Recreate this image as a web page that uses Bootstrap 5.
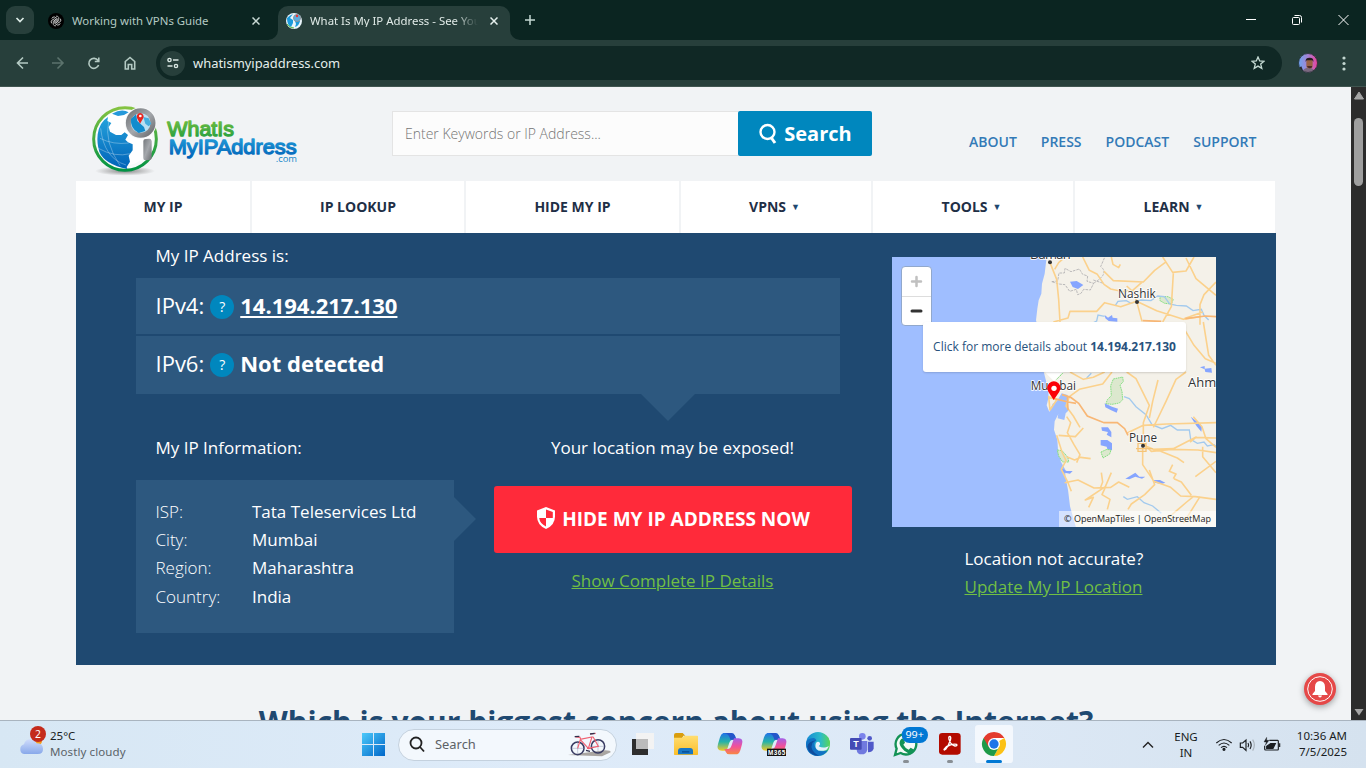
<!DOCTYPE html>
<html lang="en">
<head>
<meta charset="utf-8">
<title>What Is My IP Address</title>
<link href="https://cdn.jsdelivr.net/npm/bootstrap@5.3.0/dist/css/bootstrap.min.css" rel="stylesheet">
<style>
html,body{height:768px;overflow:hidden}
body{font-family:"Open Sans","Noto Sans",sans-serif;background:#f1f3f5;line-height:1.2;font-size:13px;width:1366px}
svg{display:block;flex:none}
.chrome-ui{font-family:"Noto Sans","Open Sans",sans-serif;font-size:11.4px}
.tabstrip{height:40px;background:#0b2521;color:#b4cac3}
.tab-search{width:28px;height:28px;border-radius:9px;background:#273f3b;margin:6px 0 0 6px}
.tab-idle{width:244px;padding:1px 0 0 14px}
.tab-live{width:232px;height:34px;margin-top:6px;background:#273f3b;border-radius:10px 10px 0 0;color:#e1ebe8;padding:0 0 5px 8px}
.tab-live .ttl{width:168px;overflow:hidden;white-space:nowrap;-webkit-mask-image:linear-gradient(90deg,#000 86%,transparent)}
.toolbar{height:47px;background:#273f3b;border-bottom:1px solid #405550}
.omni{width:1126px;height:34px;border-radius:17px;background:#102825;color:#e4eeeb;font-size:12.95px}
.site-chip{width:25px;height:25px;border-radius:50%;background:#273f3b;margin-left:4px}
.viewport{height:633px;overflow:hidden}
.page-body{width:1351px;background:#f1f3f5;padding-left:76px}
.site{width:1200px}
.site-head{height:94px}
.search-in{width:346px;height:45px;border:1px solid #e4e4e4;border-right:0;background:#fcfcfc;color:#757575;font-weight:300;font-size:14px;padding:1px 0 0 12px}
.search-go{width:134px;height:45px;background:#0087be;color:#fff;font-weight:700;font-size:20px;border-radius:2px}
.toplinks{gap:24px;font-size:14px;font-weight:600;letter-spacing:0;color:#337ab7}
.mainnav{height:52px;gap:2px;font-size:14px;font-weight:700;color:#1f2f46}
.mainnav>div{background:#fff}
.mainnav i{font-style:normal;font-size:9px;color:#1f4870;margin:0 3px 0 5px}
.panel{height:432px;background:#1f4971;color:#fff;font-size:17px;padding-left:60px}
.ln{line-height:28px;white-space:nowrap}
.iprow{background:#2d587f;padding-left:19.5px;font-size:22px}
.iprow b,.iprow .lbl{position:relative;top:-1px}
.q{width:24px;height:24px;border-radius:50%;background:#0087be;font-size:14px;margin:2px 6px 0 6px}
.tri-dn{position:absolute;left:505px;top:116px;border:27px solid transparent;border-top-color:#2d587f;border-bottom:0}
.tri-rt{position:absolute;left:318px;top:17px;border:22px solid transparent;border-left-color:#2d587f;border-right:0}
.infobox{position:relative;width:318px;height:153px;background:#2d587f;padding:18px 0 0 19.5px}
.infobox .k{width:96.5px;font-weight:300}
.infobox .ln:last-child{margin-top:1px}
.hidebtn{width:358px;height:67px;border-radius:3px;background:#ff2a3a;font-size:19px;font-weight:700}
.green{color:#71bf44;text-decoration:underline}
.mapbox{width:324px;height:270px;position:relative}
.zoomer{position:absolute;left:9px;top:9px;width:31px;height:60px;border:1px solid #91a8cc;border-radius:4px;background:#fff}
.popup{position:absolute;left:31px;top:65px;width:263px;height:50px;background:#fff;border-radius:3px;color:#28527d;font-size:12px;box-shadow:0 1px 2px rgba(0,0,0,.15);white-space:nowrap}
.attrib{position:absolute;right:0;bottom:0;height:16px;width:157px;background:rgba(255,255,255,.55);color:#222;font-size:9px;white-space:nowrap}
.bigq{font-size:30px;font-weight:700;color:#1f4971;line-height:40px;padding-top:37px;white-space:nowrap}
.scroller{width:15px;background:#2c2c2c}
.thumb{width:9px;height:68px;border-radius:5px;background:#9f9f9f;margin-top:18px}
.bell{position:absolute;left:1302px;top:671px;filter:drop-shadow(0 2px 3px rgba(0,0,0,.35))}
.taskbar{height:48px;border-top:1px solid #a9b4bf;background:linear-gradient(90deg,#d7e7f4,#deebf9 40%,#dde9f6 70%,#d5e2ef);font-family:"Noto Sans","Open Sans",sans-serif;font-size:11.5px;color:#191d22}
.wsearch{width:219px;height:32px;border-radius:16px;background:#f3f8fd;border:1px solid #c4d1de;color:#5c6166;font-size:12.900px;margin-left:13px}
</style>
</head>
<body class="d-flex flex-column">
<header class="chrome-ui flex-shrink-0">
  <div class="tabstrip d-flex">
    <div class="tab-search d-flex align-items-center justify-content-center"><svg width="10" height="8" viewBox="0 0 10 8" fill="none" stroke="#dcebe6" stroke-width="1.7"><path d="M1.5 2 5 5.5 8.500 2"/></svg></div>
    <div class="tab-idle d-flex align-items-center">
      <svg width="16" height="16" viewBox="0 0 16 16"><circle cx="8" cy="8" r="8" fill="#000"/><g fill="none" stroke="#d8d8d8" stroke-width=".8"><g id="k"><path d="M8 3.200a2.300 2.300 0 0 1 2.700 1.400v3.200L8 9.300"/></g><use href="#k" transform="rotate(60 8 8)"/><use href="#k" transform="rotate(120 8 8)"/><use href="#k" transform="rotate(180 8 8)"/><use href="#k" transform="rotate(240 8 8)"/><use href="#k" transform="rotate(300 8 8)"/></g></svg>
      <span style="margin-left:8px">Working with VPNs Guide</span>
      <svg class="ms-auto" style="margin-right:18px" width="8" height="8" viewBox="0 0 8 8" stroke="#c9dad5" stroke-width="1.500"><path d="M.5.5l7 7M7.500.5l-7 7"/></svg>
    </div>
    <div class="tab-live d-flex align-items-center position-relative">
      <svg class="position-absolute" style="left:-10px;bottom:0" width="10" height="10"><path d="M10 0v10H0A10 10 0 0 0 10 0" fill="#273f3b"/></svg>
      <svg class="position-absolute" style="right:-10px;bottom:0" width="10" height="10"><path d="M0 0v10h10A10 10 0 0 1 0 0" fill="#273f3b"/></svg>
      <svg width="16" height="16" viewBox="0 0 16 16"><circle cx="8" cy="8" r="8" fill="#eaf5fb"/><path d="M1 5q3-3 6-4L4 5l3 2v3l-2 4Q1 12 1 5M9 8l5 0q-1 5-5 6l1-3z" fill="#1b9bdc"/><circle cx="11" cy="5" r="3.500" fill="#5aaee0" stroke="#8d9499"/><circle cx="11" cy="3" r="1.200" fill="#e33"/><path d="M1 11q2 4 7 4" stroke="#5cb848" fill="none"/></svg>
      <span class="ttl" style="margin-left:8px">What Is My IP Address - See Your</span>
      <svg style="margin-left:12px" width="8" height="8" viewBox="0 0 8 8" stroke="#e6f0ed" stroke-width="1.500"><path d="M.5.5l7 7M7.500.5l-7 7"/></svg>
    </div>
    <svg style="margin:15px 0 0 15px" width="10" height="10" stroke="#c5d8d2" stroke-width="1.500"><path d="M5 0v10M0 5h10"/></svg>
    <svg class="ms-auto" style="margin-right:17px" width="104" height="40" fill="none" stroke="#fff" stroke-width="1"><path d="M1 19.500h10M93.500 15l10 10M103.500 15l-10 10"/><rect x="47.500" y="17.500" width="7" height="7" rx="1"/><path d="M49.500 15.500h5q2 0 2 2v5"/></svg>
  </div>
  <div class="toolbar d-flex align-items-center">
    <svg width="156" height="46" fill="none" stroke="#b4cac3" stroke-width="1.600"><path d="M28 23H17.500M23 17.500 17.500 23l5.500 5.500"/><g stroke="#5c736d"><path d="M52 23h10.500M57.500 17.500 63 23l-5.500 5.500"/></g><path d="M98 20.500A5 5 0 1 0 98.600 25M98.800 17.500v4h-4"/><path d="M125.300 29v-7.500l4.700-4 4.700 4v7.500h-3v-4.500h-3.400v4.500z"/></svg>
    <div class="omni d-flex align-items-center">
      <div class="site-chip d-flex align-items-center justify-content-center"><svg width="12" height="12" fill="none" stroke="#dbe8e4" stroke-width="1.400"><circle cx="2.500" cy="3" r="1.600"/><path d="M6 3h5.500M.5 9h5"/><circle cx="9" cy="9" r="1.600"/></svg></div>
      <span style="margin-left:8px;padding-top:1px">whatismyipaddress.com</span>
      <svg class="ms-auto" style="margin-right:17px" width="14" height="14" viewBox="0 0 14 14" fill="none" stroke="#c6dbd4" stroke-width="1.300"><path d="M7 1l1.700 4 4.300.3-3.300 2.800 1.100 4.300L7 10.100l-3.800 2.300 1.100-4.300L1 5.300 5.300 5z"/></svg>
    </div>
    <svg style="margin-left:16px" width="20" height="20" viewBox="0 0 60 60"><defs><linearGradient id="av"><stop offset="0" stop-color="#69a6ef"/><stop offset=".5" stop-color="#a682d4"/><stop offset="1" stop-color="#ef3b98"/></linearGradient><clipPath id="avc"><circle cx="30" cy="30" r="29"/></clipPath></defs><g clip-path="url(#avc)"><rect width="60" height="60" fill="url(#av)"/><path d="M12 60q4-16 20-16t20 16" fill="#7b6880"/><path d="M0 46l10-6 8 20H0z" fill="#29242b"/><rect x="25" y="18" width="19" height="28" rx="8" fill="#9a6246"/><path d="M23 27q-2-13 12-13 13 0 11 13l-3-5H26z" fill="#271c20"/><path d="M27 39h15v4q-7 6-13 0z" fill="#4a2c28"/></g><circle cx="30" cy="30" r="28.500" fill="none" stroke="#222e30" stroke-width="2.500"/></svg>
    <svg style="margin-left:24px" width="4" height="16" fill="#c3d6d0"><circle cx="2" cy="3" r="1.600"/><circle cx="2" cy="8.500" r="1.600"/><circle cx="2" cy="14" r="1.600"/></svg>
  </div>
</header>

<main class="viewport d-flex flex-shrink-0">
  <div class="page-body overflow-hidden">
   <div class="site">
    <div class="site-head d-flex">
      <svg style="margin:8px 0 0 4px" width="300" height="86" viewBox="0 0 900 258">
        <defs><linearGradient id="rg" x2="0" y2="1"><stop stop-color="#84c341"/><stop offset="1" stop-color="#009344"/></linearGradient><linearGradient id="gw" x2="0" y2="1"><stop stop-color="#7dc242"/><stop offset="1" stop-color="#1d9c3e"/></linearGradient><linearGradient id="gb" x2="0" y2="1"><stop stop-color="#25a3dc"/><stop offset="1" stop-color="#0062b8"/></linearGradient><linearGradient id="gm" x2="1" y2="1"><stop stop-color="#74777b"/><stop offset=".5" stop-color="#a5a8ac"/><stop offset="1" stop-color="#6b6d71"/></linearGradient><radialGradient id="sh"><stop stop-color="#888"/><stop offset="1" stop-color="#888" stop-opacity="0"/></radialGradient></defs>
        <ellipse cx="135" cy="228" rx="90" ry="14" fill="url(#sh)"/>
        <circle cx="135" cy="132" r="94" fill="#f8fafb" stroke="url(#rg)" stroke-width="9"/>
        <circle cx="133" cy="129" r="83" fill="#fff"/>
        <path d="M53 118Q58 82 84 66l-2 12 12 6-8 12 4 14 18 10 16 0 10-8 10 8-8 14 8 8 14 6 0 18-12 16 4 18-10 16 2 6Q74 208 58 170 50 145 53 118" fill="url(#gb)"/>
        <path d="M96 56q30-16 50-4l-14 8-18 3z" fill="#2599da"/><path d="M182 122q32-8 33 8-2 50-34 70l-10-18-8-20 4-22z" fill="#fff"/>
        <path d="M62 100q10 90 76 110M55 160q50 28 96 16M86 80q-14 60 34 132M60 130q40 20 86 14" fill="none" stroke="#fff" stroke-opacity=".45" stroke-width="2"/>
        <circle cx="182" cy="84" r="43" fill="#fff" stroke="#f6f8f9" stroke-width="9"/>
        <circle cx="182" cy="84" r="37" fill="#b9e0f3" stroke="url(#gm)" stroke-width="15"/>
        <path d="M153 72l15-14 4 20 20 18 4 12-20 6q-26-14-23-42" fill="#118ccd"/><path d="M190 66l16 4 8 16-8 8-10-8z" fill="#46aede"/>
        <path d="M180 86l-9-17a10.500 10.500 0 1 1 19 0z" fill="#e8251f"/><circle cx="181" cy="63" r="4" fill="#fff"/>
        <path d="M190 138q0-6 7-6l11-1q6 0 7 7v52q0 5-8 5l-11 1q-6 0-6-6z" fill="url(#gm)"/>
        <g font-family="Liberation Sans, sans-serif" stroke-linejoin="round"><text x="262" y="123" font-size="63" textLength="200" lengthAdjust="spacingAndGlyphs" fill="url(#gw)" stroke="url(#gw)" stroke-width="3.800">WhatIs</text><text x="266" y="177" font-size="63" textLength="384" lengthAdjust="spacingAndGlyphs" fill="url(#gb)" stroke="url(#gb)" stroke-width="3.800">MyIPAddress</text></g>
        <text x="587" y="201" font-family="Open Sans, sans-serif" font-size="29" textLength="64" lengthAdjust="spacingAndGlyphs" fill="#1487c9">.com</text>
      </svg>
      <div class="d-flex" style="margin:24px 0 0 12px">
        <div class="search-in d-flex align-items-center">Enter Keywords or IP Address...</div>
        <div class="search-go d-flex align-items-center justify-content-center"><svg width="19" height="22" viewBox="0 0 19 22" fill="none" stroke="#fff" stroke-width="2.400"><circle cx="9.500" cy="9" r="7"/><path d="M13.500 15l3.500 5" stroke-width="3"/></svg><span style="margin-left:7px">Search</span></div>
      </div>
      <div class="toplinks d-flex" style="margin:47px 0 0 97px"><span>ABOUT</span><span>PRESS</span><span>PODCAST</span><span>SUPPORT</span></div>
    </div>
    <nav class="mainnav d-flex text-center">
      <div class="d-flex align-items-center justify-content-center" style="width:174px">MY IP</div>
      <div class="d-flex align-items-center justify-content-center" style="width:212px">IP LOOKUP</div>
      <div class="d-flex align-items-center justify-content-center" style="width:213px">HIDE MY IP</div>
      <div class="d-flex align-items-center justify-content-center" style="width:190px">VPNS <i>▼</i></div>
      <div class="d-flex align-items-center justify-content-center" style="width:200px">TOOLS<i>▼</i></div>
      <div class="d-flex align-items-center justify-content-center" style="width:200px">LEARN <i>▼</i></div>
    </nav>
    <section class="panel d-flex">
      <div style="width:716px">
        <div class="ln" style="padding:9px 0 8px 19.5px"><span>My IP Address is:</span></div>
        <div class="position-relative" style="width:704px">
          <div class="iprow d-flex align-items-center" style="height:56px"><span class="lbl">IPv4:</span><span class="q d-flex align-items-center justify-content-center">?</span><b class="text-decoration-underline">14.194.217.130</b></div>
          <div class="iprow d-flex align-items-center" style="height:58px;margin-top:2px;padding-bottom:2px"><span class="lbl">IPv6:</span><span class="q d-flex align-items-center justify-content-center">?</span><b>Not detected</b></div>
          <div class="tri-dn"></div>
        </div>
        <div class="d-flex" style="margin-top:40px">
          <div style="width:358px"><div class="ln" style="padding-left:19.5px"><span>My IP Information:</span></div>
            <div class="infobox" style="margin-top:18px"><div class="tri-rt"></div>
              <div class="ln d-flex"><span class="k">ISP:</span><span>Tata Teleservices Ltd</span></div>
              <div class="ln d-flex"><span class="k">City:</span><span>Mumbai</span></div>
              <div class="ln d-flex"><span class="k">Region:</span><span>Maharashtra</span></div>
              <div class="ln d-flex"><span class="k">Country:</span><span>India</span></div>
            </div></div>
          <div class="text-center" style="width:357px"><div class="ln"><span>Your location may be exposed!</span></div>
            <div class="hidebtn d-flex align-items-center justify-content-center" style="margin-top:24px"><svg style="margin:-3px 0 0 1px" width="18" height="22" viewBox="0 0 18 22"><path d="M9 0l9 3.500v6Q18 18 9 22 0 18 0 9.500v-6z" fill="#fff"/><path d="M9 2.500l6.800 2.600V11H9zM2.200 11H9v8.500Q2.800 16.500 2.200 11" fill="#ff2a3a"/></svg><span style="margin-left:7px">HIDE MY IP ADDRESS NOW</span></div>
            <div class="ln green" style="margin-top:14px"><span>Show Complete IP Details</span></div></div>
        </div>
      </div>
      <div style="margin-left:40px;padding-top:24px">
        <div class="mapbox">
          <svg width="324" height="270" viewBox="36 21 972 810">
            <rect x="36" y="21" width="972" height="810" fill="#f4f1e9"/>
            <path d="M36 21H500l-6 50-8 30-2 30-8 20-4 25-4 35 8 30 14 120 14 55 2 25-6 25 8 20 10-25 20-12 10 10 0 20-14 15-10 20-2 25 10 30 2 30 10 10-2 25 14 25 0 20 8 40 6 50 14 50 8 27H36z" fill="#9fbeff"/>
            <path d="M545 430l18 5-4 25 8 20-10 10-4 20-20-5 4-30-10-15z" fill="#9fbeff"/>
            <g fill="#86a5ff"><path d="M570 95l20-2 14 8 6 4-16 12-16-6zM674 195l10 8 12-8 2 8 14 2 0 10-26-2-10-8zM664 532l20 0 10 14 0 16-14-8 4-8-18-4zM662 570l20 0 14 10 0 20-12 4-4-14-18-4zM674 460l22 10 18 6-4 12-18-8-16-8zM544 655l16 8 18 0-8 8-24-4zM736 686l30-18 12 12 18 0-10 6-20-6-18 8zM820 690l20 0 16 8-12 4-20-4zM946 346l14 6 14-4 0 8 20-2 2 14-20-2-2-8zM932 500l20 15 14 14-2 16-14-16z"/></g>
            <g fill="#dce8ce" stroke="#86e083" stroke-width="3" stroke-dasharray="5 2"><path d="M700 387l28-6 2 14-10 10 6 20 2 24-10 10-22 4-18-2 4-12 12-12-2-30z"/><path d="M840 140l24 0 16 8-6 14-20-2-14-8zM532 600l14 2 18 20 2 14-18 0-12-18zM663 606l18-8 12 2-4 12-20 12zM548 370l-18 18-12-6z"/></g>
            <g fill="none" stroke="#aeadb0" stroke-width="2.500" stroke-dasharray="8 3"><path d="M515 95l18-2 4-24 16 0 2-14 18 10 25-8 10 16 15 5-2 16 20 6-10 20-20-2-8 12-10 4-4-16-20 6-14-20-18-2zM640 90l30 10M640 100q50-30 22-50l12-28"/></g>
            <g fill="none" stroke="#a3caee" stroke-width="4"><path d="M706 166l8-12 25-2 14 8 30-10 30 2 20-14 20 2 16 22 20 4 30 2 20 14 25-4 8 18 14 14M630 223l20-10 4-18 20 4M732 440l16 6 20 24 30 24 18 30 30 12 26-10 20 14 36 0 4 28 20 12 20-4 10 12 20-4 20 18M730 740l12 8 30-8 20 18 26 10 26 22M620 384l14-14"/></g>
            <g fill="none" stroke="#fbd18c" stroke-width="4.800" stroke-linejoin="round"><path d="M510 38l20 50 6 60 4 68M524 58l12-20 18-16M608 21l20 40 24 12 20 30 20 14 38 8 28-4 30-26M672 64l28 28 90 4 34-35 32-24M694 21l5 22 17 10 5-10M848 21l30 46 40-4 24-42M918 24l30 62 60 50M770 154l-10-28-20-18M770 154l16 60M770 154l60 28 80 26 50-8M880 70l-6 100-26 46M520 216l44-12 6-20 80 0 24-26 48 12 48-16M960 224l0-60 12-30 36-38M912 206l56-20M970 216l16 100 22 30M912 236l30 50 34 40 32 14M570 366l40 22 30-6 34-16M568 440l30-22 70-16 28-36M568 440l-10 28 22 30 20 34M740 366l28 20 40 80-18 52 0 48M740 550l50-24 70-4 148-4M918 366l-30 22-30 66-24 50-14 28M834 390l-16 64-10 50M950 560l-70 36-60 2-32-14M790 580l24 24 60-6 80 2 54 8M788 590l0 54 34 50 50 18 30 26 44 2 62 8M560 500l12 18-10 30 20 36 18 30-10 24M610 534l-24 26-50-4M530 556l16 50 12 26-14 26 20 40 10 26M560 620l24 10 18-8 30 4M554 698l40-8 48 24 50-2 24-16 32 16M664 668l4 28-6 16M694 668l-18 42-60 40 24-8-14 30M676 712l-10 22 24 14-8 30M808 660l16 44-30 30-40 28-10 16M878 644l-10 20 20 8-8 14M940 500l26 30 12 36 30 26M930 576l18-14 60 2M968 590l0 30 40 48M912 638l-20-14-50-20M940 740l-20 16-70 60M960 740l-50 80M934 736l-30-40-22-10M946 680l62-46M530 450l-20 30-4-40z"/></g>
            <g fill="none" stroke="#f8b775" stroke-width="5"><path d="M546 434l26 8 24 18 26 38 50 20 40 0 22 18 10 20M524 446l40 10 24 4M562 440l2 40M788 212l56 2M916 206l60-8 32 2"/></g>
            <path d="M774 580h24v24h-24zM768 596h50" fill="none" stroke="#f5c477" stroke-width="4"/>
            <g font-family="Open Sans, sans-serif" fill="#333" font-size="39" stroke="#fff" stroke-width="5" paint-order="stroke"><text x="450" y="27" textLength="122">Daman</text><text x="714" y="144" textLength="113" lengthAdjust="spacingAndGlyphs">Nashik</text><text x="452" y="420" textLength="136" lengthAdjust="spacingAndGlyphs">Mumbai</text><text x="924" y="410">Ahmednagar</text><text x="747" y="575" textLength="84" lengthAdjust="spacingAndGlyphs">Pune</text></g>
            <g fill="#333"><circle cx="510" cy="37" r="6"/><circle cx="771" cy="156" r="6"/><circle cx="789" cy="587" r="6"/></g>
            <path d="M492 364h60l-30 30z" fill="#fff"/>
            <path d="M521 450l-16-25a20 20 0 1 1 33 0z" fill="#fb0007"/><circle cx="522" cy="415" r="8" fill="#fff"/>
          </svg>
          <div class="zoomer"><svg width="29" height="58"><path d="M0 29.500h29" stroke="#ddd"/><path d="M14.500 10v9M10 14.500h9" stroke="#c0c0c0" stroke-width="2.500" stroke-linecap="round"/><path d="M10 44h9" stroke="#333" stroke-width="3" stroke-linecap="round"/></svg></div>
          <div class="popup d-flex align-items-center justify-content-center"><span>Click for more details about <b>14.194.217.130</b></span></div>
          <div class="attrib d-flex align-items-center justify-content-center"><span>© OpenMapTiles | OpenStreetMap</span></div>
        </div>
        <div class="ln" style="margin:18px 0 0 72.5px"><span>Location not accurate?</span></div>
        <div class="ln green" style="margin-left:72.5px"><span>Update My IP Location</span></div>
      </div>
    </section>
    <div class="bigq text-center"><span>Which is your biggest concern about using the Internet?</span></div>
   </div>
  </div>
  <div class="scroller d-flex flex-column align-items-center"><svg style="margin-top:5px" width="10" height="8"><path d="M5 0l4.500 7h-9z" fill="#a5a5a5" stroke="#a5a5a5" stroke-linejoin="round"/></svg><div class="thumb"></div><svg class="mt-auto" style="margin-bottom:4px" width="10" height="8"><path d="M5 7.500 9.500 1h-9z" fill="#a5a5a5"/></svg></div>
</main>
<svg class="bell" width="36" height="36"><circle cx="18" cy="18" r="16" fill="#e54848"/><circle cx="18" cy="18" r="12.300" fill="none" stroke="#fff"/><path d="M18 10q5 .5 5 6v4l2.500 3v1h-15v-1l2.500-3v-4q0-5.500 5-6M16 24.500h4q-.5 2-2 2t-2-2" fill="#fff"/></svg>

<footer class="taskbar d-flex flex-shrink-0 align-items-center">
  <svg style="margin:-5px 0 0 16px" width="32" height="36" viewBox="48 192 96 108"><defs><linearGradient id="cl" x2="0" y2="1"><stop stop-color="#cfdcfb"/><stop offset="1" stop-color="#88a8ea"/></linearGradient></defs><circle cx="114" cy="242" r="12" fill="#f59b1c"/><path d="M72 282a15 15 0 0 1 0-29q4-15 19-15 14 0 19 12 18 0 19 16t-16 16z" fill="url(#cl)"/><circle cx="114" cy="222" r="24" fill="#c42b1c"/><text x="114" y="233" text-anchor="middle" font-family="Noto Sans, sans-serif" font-size="31" fill="#fff">2</text></svg>
  <div style="margin:-2px 0 0 2px;line-height:16px;width:312px"><div>25°C</div><div style="color:#5a6268"><span style="letter-spacing:.1px">Mostly cloudy</span></div></div>
  <svg width="23" height="23"><defs><linearGradient id="wn" gradientUnits="userSpaceOnUse" x1="0" y1="0" x2="23" y2="23"><stop stop-color="#4cc9fa"/><stop offset="1" stop-color="#0067c9"/></linearGradient></defs><path d="M0 0h11v11H0zM12 0h11v11H12zM0 12h11v11H0zM12 12h11v11H12z" fill="url(#wn)"/></svg>
  <div class="wsearch d-flex align-items-center"><svg style="margin-left:10px" width="16" height="17" fill="none" stroke="#222" stroke-width="1.800"><circle cx="7" cy="7" r="5.500"/><path d="M11 11l4 4.500"/></svg><span style="margin-left:10px">Search</span>
    <svg class="ms-auto" style="margin-right:4px" width="45" height="28" viewBox="655 50 135 84"><path d="M658 122l110-14q20 0 18 6l-26 12z" fill="#a9a5a1"/><g fill="none" stroke="#383b62" stroke-width="4.500"><circle cx="687" cy="102" r="19"/><circle cx="748" cy="96" r="20"/></g><g stroke="#6d739b" stroke-width="1"><path d="M687 83v38M668 102h38M748 76v40M728 96h40"/></g><path d="M687 102l8-26 24 26 11-34-36 7M719 102l30-6-16-29M680 68l14 1 2 6M725 59l16-2M715 102h12" fill="none" stroke="#ef6172" stroke-width="3.500"/><path d="M678 67l14-1M724 59l14-2M712 108l12 3" stroke="#30304b" stroke-width="4"/></svg></div>
  <svg style="margin-left:15px" width="416" height="47" viewBox="-84 18 1248 141">
    <defs><linearGradient id="c2" x2="0" y2="1"><stop stop-color="#2272e8"/><stop offset=".5" stop-color="#24b3a9"/><stop offset="1" stop-color="#f3c928"/></linearGradient><linearGradient id="c3" x2="0" y2="1"><stop stop-color="#a45fe8"/><stop offset=".5" stop-color="#f1519a"/><stop offset="1" stop-color="#f98842"/></linearGradient><linearGradient id="e1" x2="1"><stop stop-color="#168bd5"/><stop offset=".6" stop-color="#2dbbc9"/><stop offset="1" stop-color="#5ad655"/></linearGradient><linearGradient id="fd" x2="0" y2="1"><stop stop-color="#ffde72"/><stop offset="1" stop-color="#fbbd28"/></linearGradient></defs>
    <g transform="translate(-4 0)"><path d="M-86 72h54v48h-54z" fill="#2e2e2e"/><path d="M-68 54h54v48h-54z" fill="#f3f3f3"/><path d="M-68 72h36v30h-36z" fill="#bbb"/></g>
    <path d="M42 60q0-6 6-6h20l8 8h-6l-4 8H42z" fill="#d99d0e"/><path d="M42 68h24l8-6h38q2 0 2 2v54q0 2-2 2H44q-2 0-2-2z" fill="url(#fd)"/><path d="M54 118v-10q0-9 9-9h27q9 0 9 9v10z" fill="#1877c5"/><path d="M66 108h22v5H66z" fill="#0a549b"/>
    <g id="cop"><path d="M190 54h24q8 0 11 8l4 12h-10q-8 0-11 9l-8 24h-14q-18 0-12-20l6-20q3-11 10-13" fill="url(#c2)"/><path d="M194 54h20q8 0 11 8l4 12h-18q-4-18-17-20" fill="#2556c9"/><path d="M232 118h-24q-8 0-11-8l-4-8h10q8 0 11-9l8-23h14q15 0 10 18l-5 18q-3 10-9 12" fill="url(#c3)"/></g>
    <use href="#cop" x="132"/><rect x="321" y="101" width="57" height="22" fill="#111"/><text x="324" y="119" font-family="Liberation Sans,sans-serif" font-size="19" font-weight="700" fill="#fff" textLength="52">M365</text>
    <circle cx="474" cy="87" r="36" fill="url(#e1)"/><path d="M438 87q2-25 30-25 22 0 24 18-10-12-22-4t-4 22q8 16 38 8-12 17-30 17-34-2-36-36" fill="#1272c4"/><path d="M457 84q-10 22 20 39-30-2-35-28 2-16 28-19-9 2-13 8" fill="#0f4d9d"/><path d="M470 80q12-4 13 4 1 6-4 10 8 6 20 0 14-8 10-16-6-22-36-24-24 0-33 22 28-16 30 4" fill="url(#e1)"/><path d="M468 84q6-7 12 0 2 6-4 10 12 6 24 2 5-2 7-4-3 8-8 13-22 6-29-2-6-8-2-19" fill="#e5f0fb"/>
    <circle cx="607" cy="64" r="10" fill="#7b83eb"/><circle cx="629" cy="70" r="7" fill="#5059c9"/><path d="M590 78h32v26q-3 14-17 14t-15-14z" fill="#7079df"/><path d="M624 80h17v20q-2 12-17 12z" fill="#5059c9"/><rect x="570" y="69" width="35" height="35" rx="3" fill="#444bb5"/><text x="588" y="96" text-anchor="middle" font-family="Liberation Sans,sans-serif" font-weight="700" font-size="27" fill="#fff">T</text>
    <path d="M705 120l5-19a31 31 0 1 1 12 13z" fill="#f4faf7" stroke="#139256" stroke-width="7"/><path d="M722 74q6-7 10 0l3 9-5 6q6 11 16 15l6-6 11 6q2 6-5 10-10 5-25-7-17-16-14-26 1-5 3-7" fill="#139256"/><rect x="725" y="36" width="79" height="48" rx="24" fill="#0078d4"/><text x="764" y="69" text-anchor="middle" font-family="Noto Sans,sans-serif" font-size="27" fill="#fff" textLength="55" lengthAdjust="spacingAndGlyphs">99+</text>
    <rect x="837" y="54" width="65" height="65" rx="10" fill="#b30b00"/><path d="M852 103q6-9 18-13 12-4 20-2 3 5-5 5-13-3-18-20-2-9 3-9 4 2 1 12-6 18-14 27-5 4-5 0z" fill="none" stroke="#fff" stroke-width="4"/>
    <rect x="945" y="30" width="114" height="114" rx="10" fill="#f4f8fd"/>
    <circle cx="1002" cy="87" r="36" fill="#fff"/><path d="M1002 87 1033.200 69A36 36 0 0 1 1002 123l15-27z" fill="#fbc116"/><path d="M1002 87l15 9-15 27A36 36 0 0 1 970.800 69z" fill="#1d9a49"/><path d="M970.800 69a36 36 0 0 1 62.400 0H1002l-16 27z" fill="#e33b2e"/><circle cx="1002" cy="87" r="18" fill="#fff"/><circle cx="1002" cy="87" r="14" fill="#1f74e8"/>
    <rect x="978" y="135" width="48" height="9" rx="4.500" fill="#0078d4"/><rect x="729" y="135" width="18" height="9" rx="4.500" fill="#888e94"/><rect x="861" y="135" width="18" height="9" rx="4.500" fill="#888e94"/>
  </svg>
  <svg style="margin-left:auto" width="12" height="8" fill="none" stroke="#222" stroke-width="1.400"><path d="M1 6.500 6 1.500l5 5"/></svg>
  <div class="text-center" style="width:26px;margin-left:19px;line-height:16px">ENG<br>IN</div>
  <svg style="margin-left:16px" width="66" height="20" viewBox="345 222 198 60" fill="none" stroke="#1b1e22" stroke-width="3.500"><path d="M349 246q23-21 46 0M356 253q16-14 32 0M363 260q9-8 18 0"/><circle cx="372" cy="265" r="3" fill="#1b1e22"/><path d="M421 246h7l10-9v31l-10-9h-7zM444 246q4 6 0 13M450 241q7 11 0 23"/><path d="M458 236q10 16 0 33" stroke="#aab3bb"/><path d="M508 238h25q2 0 2 3v24q0 2-2 2h-36q-3 0-3-3v-10M539 247v11"/><path d="M500 262v-6l12-8h14l-7 14z" fill="#1b1e22"/><path d="M500 229l-8 14h7l-3 10 11-15h-7z" fill="#1b1e22" stroke-width="1"/></svg>
  <div class="text-end" style="width:56px;margin:-2px 19px 0 10px;line-height:16px;white-space:nowrap">10:36 AM<br>7/5/2025</div>
</footer>
<script src="https://cdn.jsdelivr.net/npm/bootstrap@5.3.0/dist/js/bootstrap.bundle.min.js"></script>
</body>
</html>
